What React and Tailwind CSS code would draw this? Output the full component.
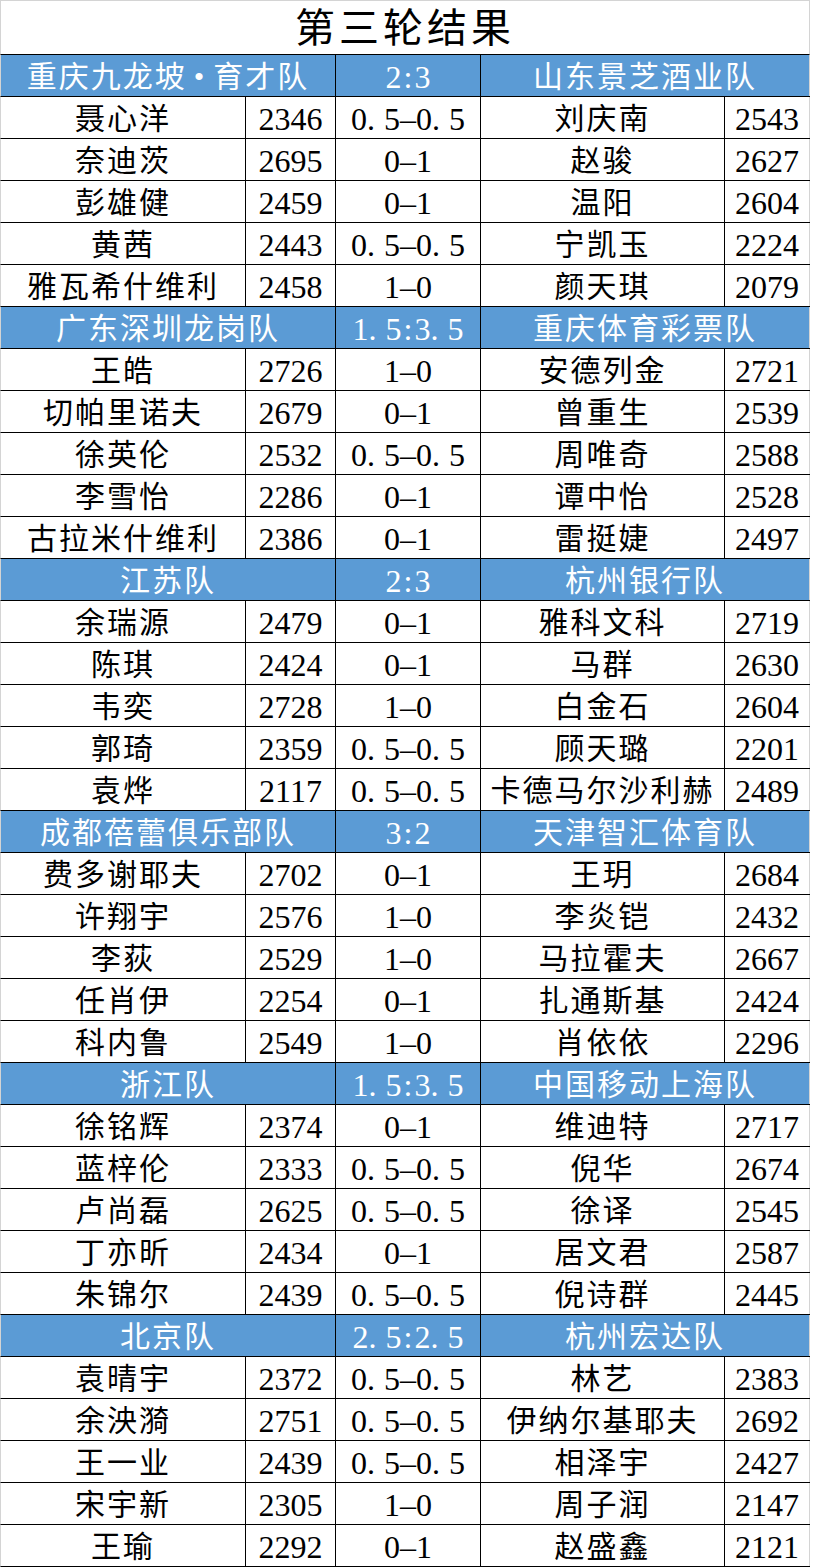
import React from "react";

const matches = [
  {
    home: "重庆九龙坡•育才队",
    score: "2:3",
    away: "山东景芝酒业队",
    games: [
      ["聂心洋", "2346", "0.5-0.5", "刘庆南", "2543"],
      ["奈迪茨", "2695", "0-1", "赵骏", "2627"],
      ["彭雄健", "2459", "0-1", "温阳", "2604"],
      ["黄茜", "2443", "0.5-0.5", "宁凯玉", "2224"],
      ["雅瓦希什维利", "2458", "1-0", "颜天琪", "2079"],
    ],
  },
  {
    home: "广东深圳龙岗队",
    score: "1.5:3.5",
    away: "重庆体育彩票队",
    games: [
      ["王皓", "2726", "1-0", "安德列金", "2721"],
      ["切帕里诺夫", "2679", "0-1", "曾重生", "2539"],
      ["徐英伦", "2532", "0.5-0.5", "周唯奇", "2588"],
      ["李雪怡", "2286", "0-1", "谭中怡", "2528"],
      ["古拉米什维利", "2386", "0-1", "雷挺婕", "2497"],
    ],
  },
  {
    home: "江苏队",
    score: "2:3",
    away: "杭州银行队",
    games: [
      ["余瑞源", "2479", "0-1", "雅科文科", "2719"],
      ["陈琪", "2424", "0-1", "马群", "2630"],
      ["韦奕", "2728", "1-0", "白金石", "2604"],
      ["郭琦", "2359", "0.5-0.5", "顾天璐", "2201"],
      ["袁烨", "2117", "0.5-0.5", "卡德马尔沙利赫", "2489"],
    ],
  },
  {
    home: "成都蓓蕾俱乐部队",
    score: "3:2",
    away: "天津智汇体育队",
    games: [
      ["费多谢耶夫", "2702", "0-1", "王玥", "2684"],
      ["许翔宇", "2576", "1-0", "李炎铠", "2432"],
      ["李荻", "2529", "1-0", "马拉霍夫", "2667"],
      ["任肖伊", "2254", "0-1", "扎通斯基", "2424"],
      ["科内鲁", "2549", "1-0", "肖依依", "2296"],
    ],
  },
  {
    home: "浙江队",
    score: "1.5:3.5",
    away: "中国移动上海队",
    games: [
      ["徐铭辉", "2374", "0-1", "维迪特", "2717"],
      ["蓝梓伦", "2333", "0.5-0.5", "倪华", "2674"],
      ["卢尚磊", "2625", "0.5-0.5", "徐译", "2545"],
      ["丁亦昕", "2434", "0-1", "居文君", "2587"],
      ["朱锦尔", "2439", "0.5-0.5", "倪诗群", "2445"],
    ],
  },
  {
    home: "北京队",
    score: "2.5:2.5",
    away: "杭州宏达队",
    games: [
      ["袁晴宇", "2372", "0.5-0.5", "林艺", "2383"],
      ["余泱漪", "2751", "0.5-0.5", "伊纳尔基耶夫", "2692"],
      ["王一业", "2439", "0.5-0.5", "相泽宇", "2427"],
      ["宋宇新", "2305", "1-0", "周子润", "2147"],
      ["王瑜", "2292", "0-1", "赵盛鑫", "2121"],
    ],
  },
];

// score strings are drawn with a wide period and a long dash, as in the sheet
const Score = ({ text }) => (
  <span>
    {text.split("").map((ch, i) =>
      ch === "." ? (
        <span key={i} className="pr-[9px]">.</span>
      ) : ch === "-" ? (
        <span key={i}>–</span>
      ) : ch === ":" ? (
        <span key={i} className="px-[2px]">:</span>
      ) : (
        <span key={i}>{ch}</span>
      )
    )}
  </span>
);

// team names: the middle dot gets room on both sides
const Team = ({ text }) => (
  <span>
    {text.split("").map((ch, i) =>
      ch === "•" ? (
        <span key={i} className="px-[7px]">•</span>
      ) : (
        <span key={i}>{ch}</span>
      )
    )}
  </span>
);

const font = "font-['Liberation_Serif','Noto_Sans_CJK_SC',serif]";

const HeaderRow = ({ m }) => (
  <div className="flex h-[42px] bg-[#5b9bd5] text-white border-b border-black border-l border-l-[#d4d4d4] w-[810px]">
    <div className="w-[335px] shrink-0 flex items-center justify-center pt-[3px] border-r border-black text-[30px] tracking-[2px]">
      <Team text={m.home} />
    </div>
    <div className="w-[145px] shrink-0 flex items-center justify-center pt-[3px] border-r border-black text-[32px]">
      <Score text={m.score} />
    </div>
    <div className="flex-1 flex items-center justify-center pt-[3px] border-r border-[#d4d4d4] text-[30px] tracking-[2px]">
      <Team text={m.away} />
    </div>
  </div>
);

const GameRow = ({ g }) => (
  <div className="flex h-[42px] bg-white text-black border-b border-black border-l border-l-[#d4d4d4] w-[810px]">
    <div className="w-[245px] shrink-0 flex items-center justify-center pt-[3px] border-r border-black text-[30px] tracking-[2px]">
      {g[0]}
    </div>
    <div className="w-[90px] shrink-0 flex items-center justify-center pt-[3px] border-r border-black text-[32px]">
      {g[1]}
    </div>
    <div className="w-[145px] shrink-0 flex items-center justify-center pt-[3px] border-r border-black text-[32px]">
      <Score text={g[2]} />
    </div>
    <div className="w-[244px] shrink-0 flex items-center justify-center pt-[3px] border-r border-black text-[30px] tracking-[2px]">
      {g[3]}
    </div>
    <div className="flex-1 flex items-center justify-center pt-[3px] border-r border-[#d4d4d4] text-[32px]">
      {g[4]}
    </div>
  </div>
);

export default function App() {
  return (
    <div className={`w-[814px] h-[1567px] bg-white ${font} leading-none`}>
      <div className="w-[810px] h-[55px] flex items-center justify-center pt-[3px] border border-[#d4d4d4] border-b-black text-[40px] tracking-[4px]">
        第三轮结果
      </div>
      {matches.map((m, i) => (
        <div key={i}>
          <HeaderRow m={m} />
          {m.games.map((g, j) => (
            <GameRow key={j} g={g} />
          ))}
        </div>
      ))}
    </div>
  );
}
